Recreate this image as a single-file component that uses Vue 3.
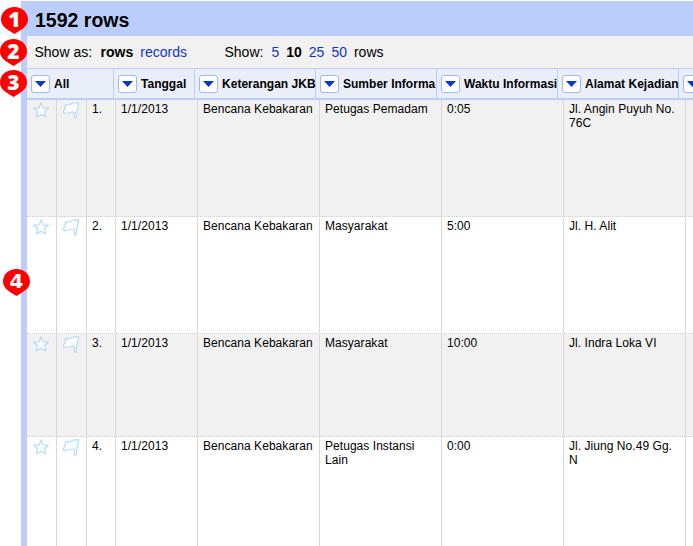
<script setup>
const columns = [
  { name: 'All', width: 87 },
  { name: 'Tanggal', width: 81 },
  { name: 'Keterangan JKB', width: 121 },
  { name: 'Sumber Informa', width: 121 },
  { name: 'Waktu Informasi', width: 121 },
  { name: 'Alamat Kejadian', width: 121 },
  { name: '', width: 121 },
]
const rows = [
  { height: 117, cells: ['1/1/2013', 'Bencana Kebakaran', 'Petugas Pemadam', '0:05', 'Jl. Angin Puyuh No. 76C', ''] },
  { height: 117, cells: ['1/1/2013', 'Bencana Kebakaran', 'Masyarakat', '5:00', 'Jl. H. Alit', ''] },
  { height: 103, cells: ['1/1/2013', 'Bencana Kebakaran', 'Masyarakat', '10:00', 'Jl. Indra Loka VI', ''] },
  { height: 117, cells: ['1/1/2013', 'Bencana Kebakaran', 'Petugas Instansi Lain', '0:00', 'Jl. Jiung No.49 Gg. N', ''] },
]
const badges = [1, 2, 3, 4]
</script>

<template>
  <div class="page">
    <main class="panel">
      <h1 class="title">1592 rows</h1>
      <div class="content">
        <div class="toolbar">
          <div class="mode"><span class="label">Show as:</span><b>rows</b><a>records</a></div>
          <div class="sizes"><span class="label-show">Show:</span><a>5</a><b>10</b><a>25</a><a>50</a><span class="unit">rows</span></div>
        </div>
        <div class="head">
          <div v-for="(c, i) in columns" :key="i" class="head-cell" :style="{ width: c.width + 'px' }">
            <span class="menu">
              <svg width="11" height="6" viewBox="0 0 11 6"><path d="M0 0H11L5.5 6Z" fill="#0838c8" /></svg>
            </span>
            <span class="name">{{ c.name }}</span>
          </div>
        </div>
        <div v-for="(r, i) in rows" :key="i" class="row" :class="{ odd: i % 2 === 0 }" :style="{ height: r.height + 'px' }">
          <div class="icon-cell">
            <svg width="18" height="18" viewBox="0 0 18 18"><path d="M9 1.9L10.9 6.9L16.3 7.2L12.5 10.5L13.6 15.7L9 13.2L4.4 15.7L5.5 10.5L1.7 7.2L7.1 6.9Z" /></svg>
          </div>
          <div class="icon-cell">
            <svg width="18" height="18" viewBox="0 0 18 18"><path d="M3.6 3.6C5.5 4.2 7.5 3.8 9 3C10.5 1.7 13 2.2 16.6 1.6L16.2 5L15 9.5L14.2 16.8H12.5L12.2 11.4C10 10.6 8.5 11 7 12L2 12.3L1.3 10.3L3 8Z" /></svg>
          </div>
          <div class="number">{{ i + 1 }}.</div>
          <div v-for="(c, j) in r.cells" :key="j" class="cell" :class="{ date: j === 0 }">{{ c }}</div>
        </div>
      </div>
    </main>
    <div v-for="n in badges" :key="n" class="badge" :class="'badge-' + n">
      <svg class="pin" width="27" height="27" viewBox="0 0 27 27"><path d="M13.5 0C21 0 27 5 27 12.5C27 20 20 22.5 13.5 27C7 22.5 0 20 0 12.5C0 5 6 0 13.5 0Z" fill="#f00" /></svg>
      <span class="digit">{{ n }}</span>
    </div>
  </div>
</template>

<style>
body { background: #fff; overflow: hidden; }
</style>
<style scoped>
.page { position: relative; box-sizing: border-box; width: 693px; height: 546px; padding: 1px 0 0 21px; overflow: hidden; font-family: "Liberation Sans", Arial, sans-serif; color: #000; }
.panel { height: 545px; background: #bbcdfb; overflow: hidden; }
.title { box-sizing: border-box; height: 35px; margin: 0; padding: 7px 0 0 14px; font-size: 19.5px; line-height: 24px; font-weight: bold; }
.content { height: 510px; margin-left: 6px; background: #fff; overflow: hidden; }
.toolbar { display: flex; height: 32px; background: #f1f1f1; font-size: 14px; line-height: 32px; white-space: nowrap; }
.mode { width: 190px; padding-left: 7.5px; }
.label { margin-right: 8.5px; }
.mode b { margin-right: 7px; }
.sizes { display: flex; gap: 7px; }
.label-show { margin-right: 1px; }
a { color: #1136c4; }
.head { display: flex; box-sizing: border-box; height: 32px; border-top: 1px solid #bbcdfb; border-bottom: 2px solid #bbcdfb; background: #e9eef8; }
.head-cell { display: flex; flex: none; align-items: center; box-sizing: border-box; padding-left: 4px; border-right: 1px solid #bbcdfb; }
.menu { display: flex; flex: none; align-items: center; justify-content: center; box-sizing: border-box; width: 19px; height: 18px; border: 1px solid #a2b7fa; border-radius: 3px; background: #fff; }
.name { margin-left: 4px; font-size: 12px; letter-spacing: 0.02px; font-weight: bold; white-space: nowrap; }
.row { display: flex; box-sizing: border-box; border-bottom: 1px dotted #d2d2d2; font-size: 12px; letter-spacing: 0.05px; line-height: 14px; background: #fff; }
.odd { background: #f1f1f1; }
.row > div { flex: none; box-sizing: border-box; border-right: 1px solid #d8d8d8; }
.icon-cell { padding: 1px 0 0 5px; width: 30px; }
.icon-cell svg { display: block; fill: #fbfdff; stroke: #b6dafa; stroke-width: 1.2; stroke-linejoin: round; }
.number { width: 29px; padding: 2px 0 0 5px; }
.cell { width: 122px; padding: 2px 5px 0; }
.row > .date { width: 82px; }
.badge { position: absolute; width: 27px; height: 27px; }
.pin { display: block; }
.digit { position: absolute; top: 0; left: 0; width: 27px; text-align: center; color: #fff; font: 800 21px/25px "Open Sans", sans-serif; }
.badge-1 { left: 1px; top: 7px; }
.badge-2 { left: 0; top: 39px; }
.badge-3 { left: 0; top: 70px; }
.badge-4 { left: 3px; top: 269px; }
.badge-4 .digit { font: bold 20px/25px "DejaVu Sans", sans-serif; }
</style>
